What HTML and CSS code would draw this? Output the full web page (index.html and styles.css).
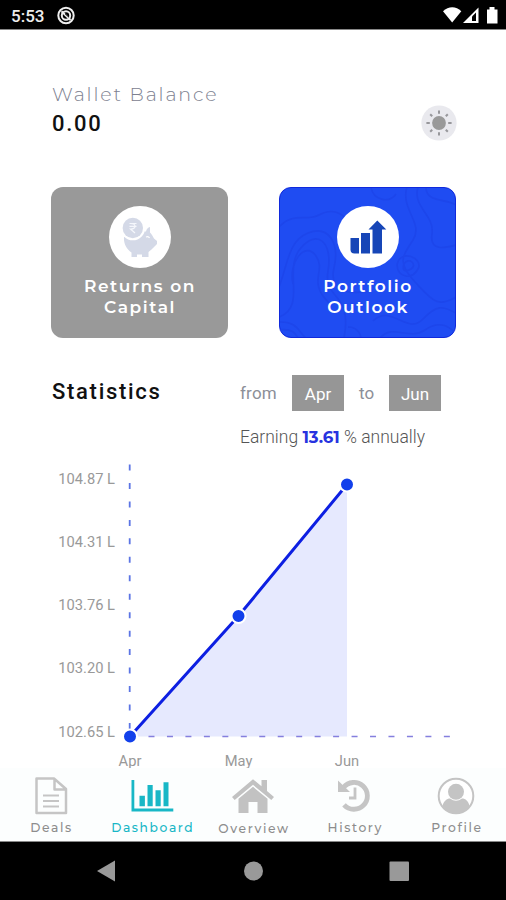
FILE: index.html
```html
<!DOCTYPE html>
<html lang="en">
<head>
<meta charset="utf-8">
<title>Dashboard</title>
<link rel="stylesheet" href="styles.css">
</head>
<body>
<div class="phone">
  <div class="status">
    <span class="clock">5:53</span>
    <svg class="dnd" width="20" height="20" viewBox="0 0 20 20"><circle cx="10" cy="9.500" r="7.700" fill="none" stroke="#eee" stroke-width="2"/><circle cx="10" cy="9.500" r="4.200" fill="none" stroke="#eee" stroke-width="2"/><path d="M5.500 5.300L14.500 14" stroke="#eee" stroke-width="2"/><path d="M9 7.700l4 3.600" stroke="#000" stroke-width="1"/></svg>
    <svg class="signals" width="58" height="20" viewBox="0 0 58 20"><path d="M1 5.300C6.500 -.2 14 -.2 19.300 5.300L10.200 16.500Z" fill="#fff"/><path d="M21 17L36.500 1.500v15.500Z" fill="#fff"/><path d="M30 15v-4.500l4-4v8.500Z" fill="#000"/><path d="M45 3.500h2.500V1h5v2.500H55.500V17.500H45Z" fill="#fff"/></svg>
  </div>
  <main class="content">
    <header class="wallet">
      <div>
        <div class="wallet-label">Wallet Balance</div>
        <div class="wallet-value">0.00</div>
      </div>
      <svg class="sun" width="36" height="36" viewBox="-18 -18 36 36"><circle r="17.600" fill="#e9e9ee"/><circle r="6.900" fill="#999"/><g stroke="#97979b" stroke-width="2"><path d="M0-12.600v3.400M0 9.200v3.400M-12.600 0h3.400M9.200 0h3.400M-8.800-8.800l2 2M8.800-8.800l-2 2M-8.800 8.800l2-2M8.800 8.800l-2-2"/></g></svg>
    </header>
    <section class="cards">
      <div class="card card-grey">
        <svg class="disc" width="62" height="62" viewBox="0 0 62 62"><circle cx="31" cy="31" r="31" fill="#fff"/><path d="M15 31Q24 28 34 25.500L37 25.500C37.500 23 39 21.300 41 21V26.500C42.500 28 44 30.500 45 32.500L48 35V38L42.500 43.500L39.500 46V51H33V48.500H28V51H22.500V46.500C17.500 43 14.500 38 15 31Z" fill="#d4d9e7"/><circle cx="23.800" cy="22" r="12.300" fill="#fff"/><circle cx="23.800" cy="22" r="10.200" fill="#d4d9e7"/><path d="M37 31q2.500-1 3.500 1" fill="none" stroke="#fff" stroke-width="1.200"/><path d="M20.500 17.500h7M20.500 20.300h7M21.500 17.500c6 0 6 5.500 0 5.500l4.500 4" fill="none" stroke="#f5f7fc" stroke-width="1.200"/></svg>
        <div class="card-title">Returns on<br>Capital</div>
      </div>
      <div class="card card-blue">
        <svg class="waves" width="177" height="151" viewBox="0 0 177 151" fill="none" stroke="#1d46eb" stroke-width="1.600"><path d="M0 40C15 24 27 35 40 28S62 25 72 36M0 130C28 120 4 83 21 62S54 55 49 84S74 105 65 151M0 100C9 77 9 54 29 46S61 55 55 81S74 107 92 104M14 97C9 76 26 53 37 69S27 94 51 117M0 135C19 134 20 146 27 151M0 143C15 141 17 148 19 151M92 0C94 13 110 17 117 7M128 0C121 22 145 36 134 53S118 76 136 95S158 121 177 110M139 0C133 20 156 28 153 47S169 60 177 58M147 0C147 16 166 11 177 18M118 78C121 61 145 71 139 82S119 91 118 78M125 77C130 69 139 78 132 82S123 83 125 77M94 134C112 116 128 149 144 132S166 121 177 126M101 151C113 136 130 154 146 143S171 141 177 146M69 140C81 140 82 151 82 151"/></svg>
        <svg class="disc" width="62" height="62" viewBox="0 0 62 62"><circle cx="31" cy="31" r="31" fill="#fff"/><g fill="#1746b7"><path d="M13.500 32h8.500v15.500h-4.500q-4 0-4-4Z"/><path d="M24 27h9v20.500h-9Z"/><path d="M35.500 47.500V23.500H31.500L40.300 14.500L49.300 23.500H45V47.500Z"/></g></svg>
        <div class="card-title">Portfolio<br>Outlook</div>
      </div>
    </section>
    <section class="stats">
      <h1 class="stats-title">Statistics</h1>
      <div>
        <div class="range"><span class="from">from</span><span class="month">Apr</span><span class="to">to</span><span class="month">Jun</span></div>
        <div class="earning">Earning <b>13.61</b> % annually</div>
      </div>
    </section>
    <svg class="chart" width="506" height="308" viewBox="0 460 506 308">
      <path d="M130 736.500L238.500 616L347 484.500V736.500Z" fill="#e6e9fe"/>
      <path d="M129.700 464.500V736" stroke="#5b74e4" stroke-width="1.800" stroke-dasharray="6 12.460"/>
      <path d="M148.500 736.500H451" stroke="#857fde" stroke-width="1.500" stroke-dasharray="6 12.460"/>
      <path d="M130 736.500L238.500 616L347 484.500" fill="none" stroke="#0d1fe2" stroke-width="3"/>
      <g fill="#1240eb" stroke="#fff" stroke-width="2"><circle cx="130" cy="736.500" r="7"/><circle cx="238.500" cy="616" r="7"/><circle cx="347" cy="484.500" r="7"/></g>
      <g class="axis" text-anchor="end"><text x="115" y="484.300">104.87 L</text><text x="115" y="547.300">104.31 L</text><text x="115" y="610.300">103.76 L</text><text x="115" y="673.300">103.20 L</text><text x="115" y="736.500">102.65 L</text></g>
      <g class="axis" text-anchor="middle"><text x="130" y="766">Apr</text><text x="238.500" y="766">May</text><text x="347" y="766">Jun</text></g>
    </svg>
  </main>
  <nav class="tabs">
    <div class="tab"><svg width="44" height="40" viewBox="0 0 44 40" fill="none" stroke="#c5c5c5" stroke-width="2.500"><path d="M7.500 2.500H25L37 13V37H7.500ZM25.500 2.500V13.500H37" stroke-linejoin="round"/><path d="M14 19.500H30M14 25H30M14 30.500H30" stroke-width="2"/></svg><span>Deals</span></div>
    <div class="tab active"><svg width="44" height="40" viewBox="0 0 44 40" fill="#18b7c6"><path d="M1.500 4h2.800v28.600h39v3H1.500ZM9.500 19.700h5.400v10.600H9.500ZM17.500 9h5.200v21.300h-5.200ZM25.500 14.300h5.200v16h-5.200ZM33.500 6.300h5v24h-5Z"/></svg><span>Dashboard</span></div>
    <div class="tab overview"><svg width="44" height="40" viewBox="0 0 44 40" fill="#c2c2c2"><path d="M1 21L22 3.300L30.500 10.300V4H36V15L43 21L40.300 24L22 8.800L3.700 24Z"/><path d="M7.500 22.800L22 10.800L36.500 22.800V37H26.500V26H17.500V37H7.500Z"/></svg><span>Overview</span></div>
    <div class="tab"><svg width="44" height="40" viewBox="0 0 44 40" fill="none" stroke="#c5c5c5"><path d="M11.500 11.500A13.400 13.400 0 1 1 12 28.800" stroke-width="4.800"/><path d="M6 4.500L18 16H6Z" fill="#c5c5c5" stroke="none"/><path d="M23 11.500V22H17" stroke-width="2.800"/></svg><span>History</span></div>
    <div class="tab profile"><svg width="44" height="40" viewBox="0 0 44 40"><circle cx="22" cy="20" r="17.300" fill="#fff" stroke="#c4c4c4" stroke-width="2"/><circle cx="22" cy="15.800" r="8" fill="#c4c4c4"/><path d="M8.500 30C9.500 25 13 22.500 16 22.500Q22 27 28 22.500C31.500 22.500 34.500 25 35.500 30Q30 37.500 22 37.500T8.500 30Z" fill="#c4c4c4"/></svg><span>Profile</span></div>
  </nav>
  <div class="system">
    <svg width="506" height="58" viewBox="0 842 506 58" fill="#999"><path d="M97 871L115 860.500V881.500Z"/><circle cx="253.500" cy="871" r="9.500"/><rect x="389.500" y="861.500" width="19.500" height="19.500" rx="1"/></svg>
  </div>
</div>
</body>
</html>
```
FILE: styles.css
```css
* { box-sizing: border-box; }
body { margin: 0; background: #fff; font-family: Roboto, sans-serif; }
.phone { width: 506px; height: 900px; display: flex; flex-direction: column; overflow: hidden; }
svg { display: block; flex: none; }
.status { height: 30px; flex: none; display: flex; align-items: center; background: #000; border-bottom: 1px solid #888; padding: 3px 6px 0 11px; color: #eee; }
.clock { font-size: 17px; font-weight: 500; width: 45px; }
.signals { margin-left: auto; }
.content { height: 738px; flex: none; }
.wallet { height: 157px; padding: 52px 49px 0 52px; display: flex; justify-content: space-between; }
.wallet-label { font: 300 19px/26px Montserrat, Inter, sans-serif; letter-spacing: 1.85px; color: #7d8190; white-space: nowrap; }
.wallet-value { font-size: 22px; font-weight: 500; line-height: 32px; letter-spacing: 1.7px; color: #111; }
.sun { margin-top: 23px; }
.cards { display: flex; justify-content: space-between; padding: 0 50px 0 51px; }
.card { width: 177px; height: 151px; border-radius: 12px; display: flex; flex-direction: column; align-items: center; padding-top: 19px; position: relative; overflow: hidden; }
.card-grey { background: #999; }
.card-blue { background: #1f4cf2; border: 1px solid #1029dc; padding-top: 18px; }
.waves { position: absolute; left: -1px; top: -1px; }
.disc, .card-title { position: relative; }
.card-title { margin-top: 8px; padding-left: 1px; font: 600 17px/21px Montserrat, Inter, sans-serif; letter-spacing: 1.55px; color: #fff; text-align: center; }
.stats { display: flex; padding: 37px 0 0 52px; height: 121px; }
.stats-title { margin: 4px 0 0; width: 188px; font-size: 22px; line-height: 26px; font-weight: 500; letter-spacing: 1.7px; color: #111; }
.range { display: flex; align-items: center; height: 36px; font-size: 17px; color: #8c8f98; }
.from { width: 52px; letter-spacing: .2px; }
.to { width: 45px; padding-left: 15px; }
.month { width: 52px; height: 36px; line-height: 38px; background: #969696; color: #fff; text-align: center; }
.earning { margin-top: 13px; line-height: 26px; font-size: 17.5px; font-weight: 300; color: #555; white-space: nowrap; }
.earning b { font: 700 16.5px Montserrat, Inter, sans-serif; color: #2733df; }
.chart { margin-top: 1px; overflow: visible; }
.axis { font-size: 14.7px; fill: #999; }
.tabs { height: 74px; flex: none; display: flex; justify-content: space-between; background: #fcfefe; border-bottom: 1px solid #888; padding: 8px 0 0; }
.tab { width: 101px; display: flex; flex-direction: column; align-items: center; font: 500 12.3px/16px Montserrat, Inter, sans-serif; letter-spacing: 1.6px; color: #8d8d8d; }
.tab span { margin-top: 4px; padding-left: 2px; }
.overview span { margin-top: 5px; }
.profile { padding-left: 1px; }
.active { color: #18b7c6; }
.system { height: 58px; flex: none; background: #000; }
```
